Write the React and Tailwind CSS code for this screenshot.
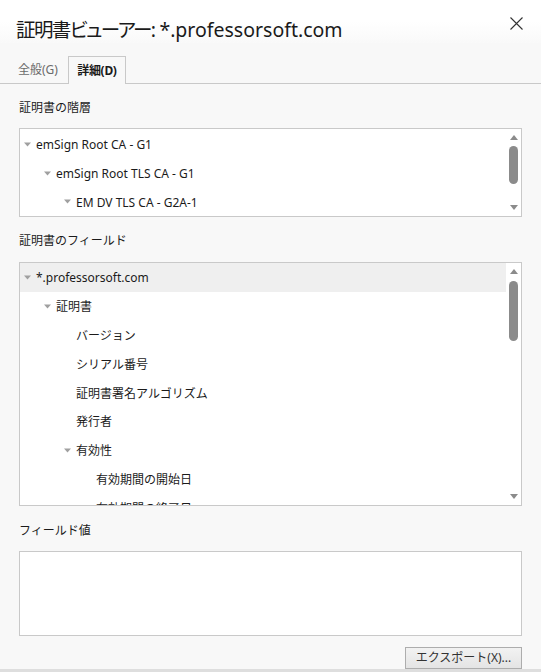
import React from 'react';

const font = { fontFamily: '"Segoe UI", "Noto Sans", "Noto Sans CJK JP", sans-serif' };

const hierarchy = [
  { label: 'emSign Root CA - G1', level: 0, open: true },
  { label: 'emSign Root TLS CA - G1', level: 1, open: true },
  { label: 'EM DV TLS CA - G2A-1', level: 2, open: true },
];

const fields = [
  { label: '*.professorsoft.com', level: 0, open: true, selected: true },
  { label: '証明書', level: 1, open: true },
  { label: 'バージョン', level: 2 },
  { label: 'シリアル番号', level: 2 },
  { label: '証明書署名アルゴリズム', level: 2 },
  { label: '発行者', level: 2 },
  { label: '有効性', level: 2, open: true },
  { label: '有効期間の開始日', level: 3 },
  { label: '有効期間の終了日', level: 3 },
];

const indent = ['pl-[4px]', 'pl-[24px]', 'pl-[44px]', 'pl-[64px]'];

// 小さい三角
const Caret = () => (
  <svg width="7" height="5" viewBox="0 0 7 5" className="mr-[5px] shrink-0">
    <path d="M0 0.5 L7 0.5 L3.5 4.5 Z" fill="#a0a0a0" />
  </svg>
);

const TreeRow = ({ item }) => (
  <div
    className={`h-[28.8px] flex items-center text-[12px] text-[#1b1b1b] whitespace-nowrap ${indent[item.level]} ${
      item.selected ? 'bg-[#efefef]' : ''
    }`}
  >
    {item.open ? <Caret /> : <span className="w-[12px] shrink-0" />}
    <span className="pt-[2px]">{item.label}</span>
  </div>
);

const ScrollBar = ({ thumbTop, thumbHeight }) => (
  <div className="w-[15px] shrink-0 flex flex-col items-center pt-[6px] pb-[6px]">
    <svg width="8" height="5" viewBox="0 0 8 5">
      <path d="M4 0 L8 5 L0 5 Z" fill="#8b8b8b" />
    </svg>
    <div className={`w-[9px] rounded-full bg-[#8b8b8b] ${thumbTop} ${thumbHeight}`} />
    <div className="flex-1" />
    <svg width="8" height="5" viewBox="0 0 8 5">
      <path d="M0 0 L8 0 L4 5 Z" fill="#8b8b8b" />
    </svg>
  </div>
);

export default function App() {
  return (
    <div className="w-[541px] h-[672px] overflow-hidden flex flex-col bg-[#f8f8f8]" style={font}>
      {/* タイトル */}
      <div className="h-[43px] shrink-0 bg-gradient-to-b from-white via-white to-[#f9f9f9] flex items-center justify-between pl-[16px] pr-[18px] pt-[16px]">
        <span className="text-[19.5px] text-[#1a1a1a] leading-none whitespace-nowrap">
          <span className="tracking-[-1.6px] [font-feature-settings:'palt']">証明書ビューアー:</span> *.professorsoft.com
        </span>
        <svg width="13" height="13" viewBox="0 0 13 13" className="-mt-[12px]">
          <path d="M0.5 0.5 L12.5 12.5 M12.5 0.5 L0.5 12.5" stroke="#333" strokeWidth="1.1" />
        </svg>
      </div>

      {/* タブ */}
      <div className="h-[41px] flex items-end border-b border-[#c9c9c9] pl-[18px] shrink-0">
        <div className="h-[27px] flex items-center text-[12px] text-[#6b6b6b] pr-[10px] pt-[1px]">全般(G)</div>
        <div className="h-[28px] w-[58px] -mb-px flex items-center justify-center pt-[1px] border border-b-0 border-[#c9c9c9] bg-[#f8f8f8] text-[12px] font-bold text-[#1a1a1a] tracking-[-0.3px]">
          詳細(D)
        </div>
      </div>

      <div className="px-[19px] flex flex-col">
        <div className="h-[44px] flex items-center pt-[4px] text-[12px] text-[#1b1b1b]">証明書の階層</div>
        <div className="h-[89px] border border-[#c9c9c9] bg-white flex overflow-hidden">
          <div className="flex-1 pt-[1px]">
            {hierarchy.map(h => (
              <TreeRow key={h.label} item={h} />
            ))}
          </div>
          <ScrollBar thumbTop="mt-[6px]" thumbHeight="h-[38px]" />
        </div>

        <div className="h-[45px] flex items-center pt-[3px] text-[12px] text-[#1b1b1b]">証明書のフィールド</div>
        <div className="h-[244px] border border-[#c9c9c9] bg-white flex overflow-hidden">
          <div className="flex-1 overflow-hidden">
            {fields.map(f => (
              <TreeRow key={f.label} item={f} />
            ))}
          </div>
          <ScrollBar thumbTop="mt-[7px]" thumbHeight="h-[60px]" />
        </div>

        <div className="h-[45px] flex items-center pt-[4px] text-[12px] text-[#1b1b1b]">フィールド値</div>
        <div className="h-[85px] border border-[#c9c9c9] bg-white" />

        <div className="flex justify-end mt-[11px]">
          <button className="w-[117px] h-[22px] border border-[#adadad] bg-gradient-to-b from-[#f2f2f2] to-[#e4e4e4] text-[12px] text-[#333] flex items-center justify-center">
            エクスポート(X)...
          </button>
        </div>
      </div>
      <div className="flex-1" />
      <div className="h-[4px] bg-[#dedede] shrink-0" />
    </div>
  );
}
